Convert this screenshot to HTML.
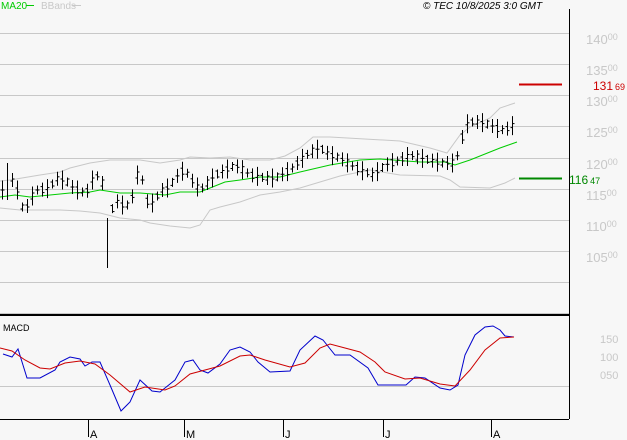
<!DOCTYPE html><html><head><style>
body{margin:0;background:#f7f7f7;width:627px;height:440px;overflow:hidden;font-family:"Liberation Sans",sans-serif}
svg{display:block}
text{font-family:"Liberation Sans",sans-serif}
</style></head><body>
<svg id="s" width="627" height="440" xmlns="http://www.w3.org/2000/svg">
<rect width="627" height="440" fill="#f7f7f7"/>
<g stroke="#c8c8c8" stroke-width="1">
<line x1="0" y1="33.5" x2="569" y2="33.5"/><line x1="0" y1="64.5" x2="569" y2="64.5"/>
<line x1="0" y1="95.5" x2="569" y2="95.5"/><line x1="0" y1="126.5" x2="569" y2="126.5"/>
<line x1="0" y1="158.5" x2="569" y2="158.5"/><line x1="0" y1="189.5" x2="569" y2="189.5"/>
<line x1="0" y1="220.5" x2="569" y2="220.5"/><line x1="0" y1="251.5" x2="569" y2="251.5"/>
<line x1="0" y1="282.5" x2="569" y2="282.5"/><line x1="0" y1="386.5" x2="569" y2="386.5"/>
<line x1="0" y1="313.5" x2="569" y2="313.5"/>
</g>
<line x1="0" y1="315" x2="569" y2="315" stroke="#000" stroke-width="2"/>
<line x1="569.5" y1="9" x2="569.5" y2="419" stroke="#000"/>
<line x1="0" y1="419.5" x2="569" y2="419.5" stroke="#000"/>
<g stroke="#000"><line x1="88.5" y1="419" x2="88.5" y2="437"/><line x1="184.5" y1="419" x2="184.5" y2="437"/><line x1="283.5" y1="419" x2="283.5" y2="437"/><line x1="383.5" y1="419" x2="383.5" y2="437"/><line x1="491.5" y1="419" x2="491.5" y2="437"/></g>
<g font-size="11" fill="#000"><text x="90" y="438">A</text><text x="186" y="438">M</text><text x="285" y="438">J</text><text x="385" y="438">J</text><text x="493" y="438">A</text></g>
<g font-size="13" fill="#c8c8c8">
<text x="586" y="44">140<tspan font-size="9" dy="-4">00</tspan></text>
<text x="586" y="75">135<tspan font-size="9" dy="-4">00</tspan></text>
<text x="586" y="106">130<tspan font-size="9" dy="-4">00</tspan></text>
<text x="586" y="137">125<tspan font-size="9" dy="-4">00</tspan></text>
<text x="586" y="169">120<tspan font-size="9" dy="-4">00</tspan></text>
<text x="586" y="200">115<tspan font-size="9" dy="-4">00</tspan></text>
<text x="586" y="231">110<tspan font-size="9" dy="-4">00</tspan></text>
<text x="586" y="262">105<tspan font-size="9" dy="-4">00</tspan></text>
</g>
<g font-size="11" fill="#c8c8c8"><text x="600" y="343">150</text><text x="600" y="361">100</text><text x="600" y="379">050</text></g>
<line x1="519" y1="84.5" x2="562" y2="84.5" stroke="#c00" stroke-width="2"/>
<text x="593" y="90" font-size="12" fill="#c00">131<tspan font-size="9" dx="2">69</tspan></text>
<line x1="519" y1="178.5" x2="562" y2="178.5" stroke="#080" stroke-width="2"/>
<text x="569" y="184" font-size="12" fill="#080">116<tspan font-size="9" dx="2">47</tspan></text>
<text x="1" y="9" font-size="10" fill="#0c0">MA20</text><line x1="26" y1="5.5" x2="34" y2="5.5" stroke="#0c0"/>
<text x="41" y="9" font-size="10" fill="#c8c8c8">BBands</text><line x1="72" y1="5.5" x2="81" y2="5.5" stroke="#c8c8c8"/>
<text x="423" y="9" font-size="10" font-style="italic" fill="#000">© TEC 10/8/2025 3:0 GMT</text>
<text x="3" y="331" font-size="9" fill="#000">MACD</text>
<polyline fill="none" stroke="#c8c8c8" points="0,181 10,180 40,175 60,172 70,168 90,163 110,160 140,160 160,163 180,160 190,157 210,158 230,157 250,160 270,160 285,156 300,148 313,137 330,137 400,141 430,148 447,153 460,135 470,127 490,118 500,108 515,103"/>
<polyline fill="none" stroke="#c8c8c8" points="0,208 20,210 60,210 80,211 100,213 120,218 140,220 150,223 170,226 190,228 200,225 210,210 220,207 240,202 260,195 280,192 300,188 320,182 340,176 370,170 400,175 440,176 450,180 460,187 490,188 505,183 515,178"/>
<polyline fill="none" stroke="#0c0" points="0,197 15,195 30,197 50,195 70,193 90,192 100,190 120,193 140,193 165,195 180,192 200,192 210,188 225,182 240,180 260,177 280,177 300,172 330,165 360,160 380,159 420,162 445,162 455,165 470,160 500,148 517,142"/>
<polyline fill="none" stroke="#00c" points="3,354 12,357 18,349 27,378 40,378 55,370 60,362 70,357 80,359 85,366 92,362 100,362 110,385 121,411 130,402 140,380 152,391 160,392 175,380 185,362 193,360 200,370 208,373 220,364 230,350 240,347 250,352 258,362 270,372 290,371 300,350 315,336 323,340 335,355 350,355 368,368 378,385 406,385 415,377 425,378 440,388 450,390 458,385 465,355 475,335 485,327 493,326 500,330 505,336 514,337"/>
<polyline fill="none" stroke="#c00" points="0,348 12,351 25,360 40,368 50,369 65,363 80,361 95,364 110,375 130,392 145,387 165,390 175,386 190,374 205,370 220,366 240,356 250,355 265,360 290,367 305,363 320,348 330,344 345,348 360,352 375,362 385,372 405,379 420,378 440,384 455,386 470,370 485,350 500,338 514,337"/>
<g id="bars" stroke="#000" stroke-width="1"></g>
</svg>
<script>
var k=[[2,190],[7,180],[15,180],[20,205],[25,210],[30,200],[35,190],[40,190],[50,188],[55,178],[60,180],[65,180],[70,185],[75,190],[80,190],[85,195],[92,180],[98,175],[103,185],[108,220],[115,200],[122,205],[130,205],[137,175],[142,180],[146,200],[150,205],[155,200],[160,190],[165,190],[170,185],[180,172],[185,170],[190,178],[195,185],[200,190],[205,185],[210,180],[215,175],[225,170],[235,165],[250,175],[265,178],[275,178],[290,170],[300,160],[310,152],[320,148],[330,155],[340,158],[350,165],[360,170],[373,175],[385,165],[400,160],[410,155],[420,158],[430,160],[440,163],[455,163],[460,145],[465,125],[470,122],[480,122],[490,125],[500,130],[510,128],[515,122]];
function f(x){for(var i=0;i<k.length-1;i++){if(x<=k[i+1][0]){var t=(x-k[i][0])/(k[i+1][0]-k[i][0]);return k[i][1]+t*(k[i+1][1]-k[i][1]);}}return k[k.length-1][1];}
var g=document.getElementById('bars'),h='';
for(var x=2;x<=515;x+=5){var y=f(x),r=8+((x*13)%15);var xx=Math.round(x)+0.5;
if(Math.abs(x-107)<3){h+='<line x1="'+xx+'" y1="218" x2="'+xx+'" y2="268"/>';continue;}
if(Math.abs(x-7)<2){h+='<line x1="'+xx+'" y1="163" x2="'+xx+'" y2="200"/>';continue;}
var o=((x*5)%7)-3;
h+='<line x1="'+xx+'" y1="'+(y-r/2)+'" x2="'+xx+'" y2="'+(y+r/2)+'"/><line x1="'+(xx-2)+'" y1="'+(y+o)+'" x2="'+xx+'" y2="'+(y+o)+'"/><line x1="'+xx+'" y1="'+(y-o)+'" x2="'+(xx+2)+'" y2="'+(y-o)+'"/>';}
g.innerHTML=h;
</script>
</body></html>
